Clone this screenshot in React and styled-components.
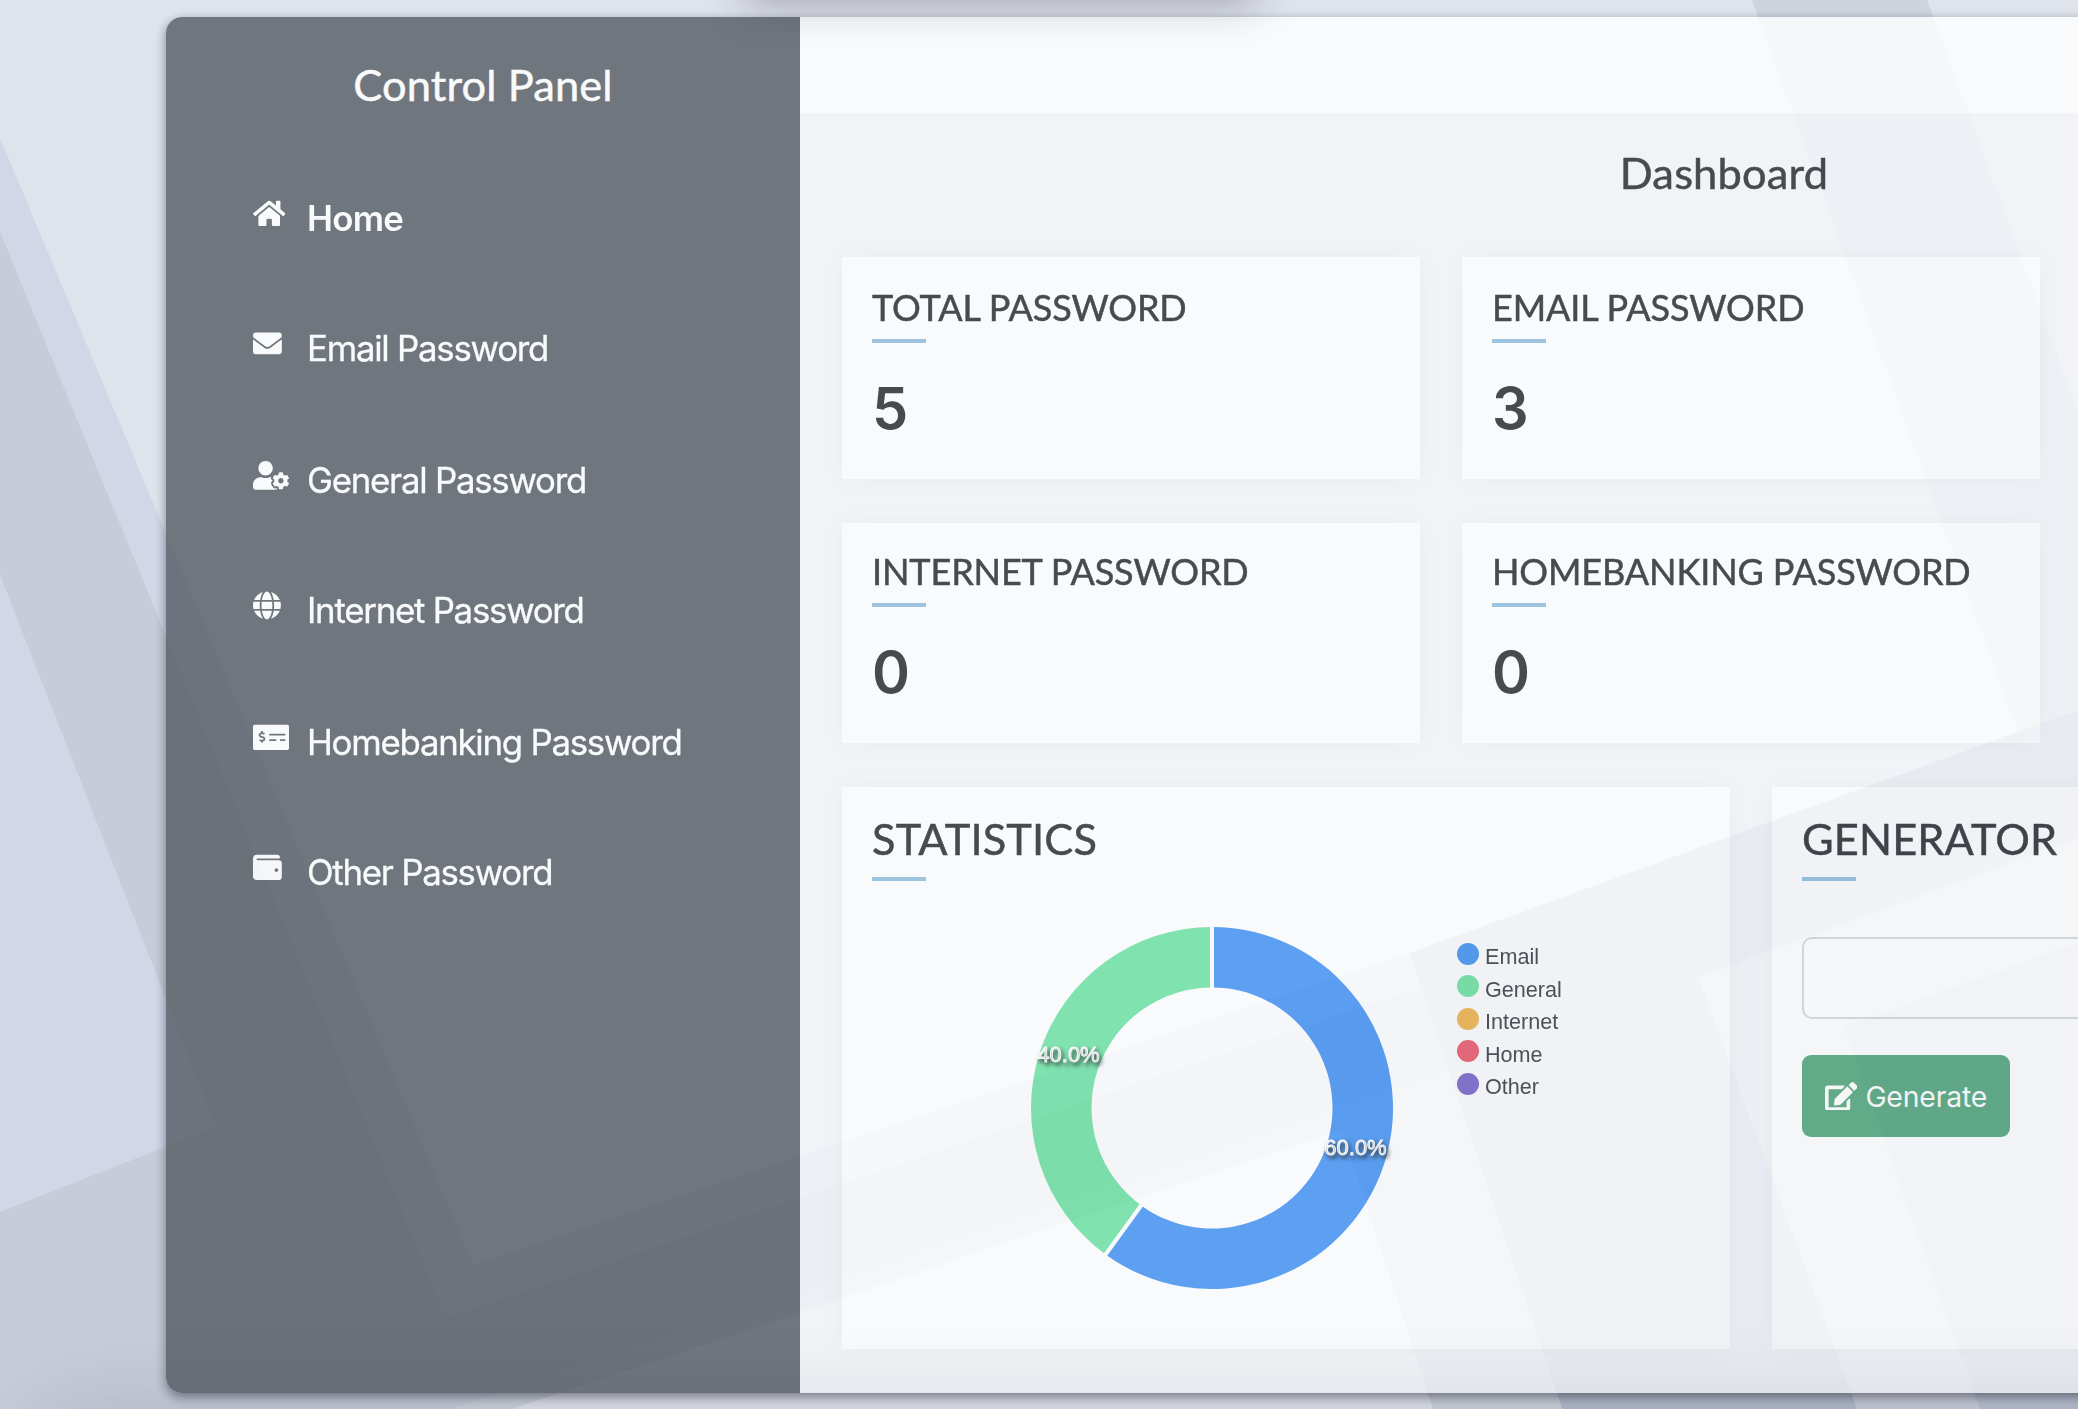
import React from "react";
import styled, { createGlobalStyle } from "styled-components";
import {
  FaHome,
  FaEnvelope,
  FaUserCog,
  FaGlobe,
  FaMoneyCheckAlt,
  FaWallet,
  FaEdit,
} from "react-icons/fa";

const heading = `Lato, "Open Sans", sans-serif`;
const body = `Inter, "Liberation Sans", sans-serif`;
const chart = `"Liberation Sans", Arial, sans-serif`;

const GlobalStyle = createGlobalStyle`
  * { box-sizing: border-box; }
  html, body { margin: 0; height: 100%; overflow: hidden; }
  body { background: #dfe3ec; color: #212529; font-family: ${body}; }
`;

const Screen = styled.div`
  position: relative;
  width: 100vw;
  height: 100vh;
  padding: 17px 0 16px 166px;
  overflow: hidden;
`;

const Wallpaper = styled.svg`
  position: absolute;
  inset: 0;
  width: 2078px;
  height: 1409px;
`;

const TopShade = styled.div`
  position: absolute;
  left: 746px;
  top: -60px;
  width: 508px;
  height: 58px;
  box-shadow: 0 2px 44px rgba(30, 30, 45, 0.37);
  pointer-events: none;
`;

const BottomShade = styled.div`
  position: absolute;
  left: 50px;
  top: 1425px;
  width: 2300px;
  height: 200px;
  border-radius: 20px;
  box-shadow: 0 0 100px rgba(20, 25, 40, 0.18);
  pointer-events: none;
`;

const Panel = styled.div`
  position: relative;
  display: flex;
  width: 2482px;
  height: 1376px;
  border-radius: 16px;
  overflow: hidden;
  background: #f6f7fb;
  opacity: 0.8;
  box-shadow: 0 4px 11px rgba(25, 22, 40, 0.62);
`;

const Sidebar = styled.aside`
  width: 634px;
  flex: none;
  background: #545b62;
  color: #fff;
`;

const SidebarTitle = styled.h1`
  margin: 0;
  padding-top: 41px;
  font: 400 43.4px/52px ${heading};
  letter-spacing: 0.12px;
  text-align: center;
  -webkit-text-stroke: 0.5px currentColor;
`;

const Nav = styled.nav`
  display: flex;
  flex-direction: column;
  padding: 43px 0 0 87px;
`;

const NavItem = styled.a`
  display: flex;
  align-items: center;
  height: 130px;
  color: #fff;
  font-size: 34.8px;
  line-height: 44px;
  font-weight: ${(p) => (p.$active ? 600 : 400)};
  letter-spacing: ${(p) => (p.$active ? "-0.75px" : "-1.25px")};
  -webkit-text-stroke: ${(p) => (p.$active ? 0 : "0.3px")} currentColor;

  &:nth-child(odd):not(:first-child) {
    margin-top: 2px;
  }
`;

const NavIcon = styled.span`
  display: flex;
  width: 54px;
  padding-bottom: 9px;
  svg {
    width: ${(p) => p.$ratio * 28.8}px;
    height: 28.8px;
  }
`;

const Main = styled.main`
  width: 1848px;
  flex: none;
`;

const TopBar = styled.header`
  height: 96px;
  background: #fff;
`;

const PageTitle = styled.h2`
  margin: 0;
  padding: 33px 0 59px;
  font: 400 43.4px/52px ${heading};
  letter-spacing: 0.2px;
  text-align: center;
  -webkit-text-stroke: 0.5px currentColor;
`;

const Content = styled.div`
  display: flex;
  flex-direction: column;
  gap: 44px;
  padding-left: 42px;
`;

const Row = styled.div`
  display: flex;
  gap: 42px;
`;

const Card = styled.section`
  flex: none;
  width: ${(p) => p.$width}px;
  height: ${(p) => p.$height}px;
  padding: ${(p) => p.$top}px 30px 0;
  background: #fff;
  box-shadow: 0 0 26px rgba(0, 0, 0, 0.045);
`;

const CardTitle = styled.h3`
  margin: 0;
  font: 400 ${(p) => (p.$large ? "43.3px/52px" : "36px/44px")} ${heading};
  letter-spacing: ${(p) => (p.$large ? "0.15px" : "-0.12px")};
  white-space: nowrap;
  -webkit-text-stroke: 0.5px currentColor;
`;

const Underline = styled.div`
  width: 54px;
  height: 4px;
  margin-top: ${(p) => (p.$large ? 13 : 10)}px;
  background: #8cbbdc;
`;

const Count = styled.div`
  margin-top: 30px;
  font-size: 57.6px;
  line-height: 70px;
  font-weight: 600;
`;

const ChartRow = styled.div`
  display: flex;
  padding: 46px 0 0 159px;
`;

const Donut = styled.svg`
  width: 362px;
  height: 362px;
  flex: none;
  overflow: visible;
`;

const PercentLabel = styled.text`
  font: 400 22px ${chart};
  fill: #fff;
  stroke: #fff;
  stroke-width: 0.9px;
  text-shadow: 2px 3px 4px rgba(0, 0, 0, 0.7);
`;

const Legend = styled.ul`
  display: flex;
  flex-direction: column;
  margin: 14px 0 0 64px;
  padding: 0;
  list-style: none;
`;

const LegendItem = styled.li`
  display: flex;
  align-items: center;
  gap: 6px;
  height: 32.5px;
  font: 400 21.6px/26px ${chart};
  color: #32363a;
`;

const Swatch = styled.span`
  width: 22px;
  height: 22px;
  margin-bottom: 7px;
  border-radius: 50%;
  background: ${(p) => p.$color};
`;

const Field = styled.input`
  display: block;
  width: 520px;
  height: 82px;
  margin-top: 56px;
  border: 2px solid #d2d5d9;
  border-radius: 10px;
  background: transparent;
`;

const GenerateButton = styled.button`
  display: flex;
  align-items: center;
  gap: 8px;
  width: 208px;
  height: 82px;
  margin-top: 36px;
  padding: 2px 0 0 23px;
  border: 0;
  border-radius: 9px;
  background: #1c8950;
  color: #fff;
  opacity: 0.8;
  font: 400 28.4px/36px ${body};
  letter-spacing: -0.2px;
  svg {
    width: 32.4px;
    height: 28.8px;
    margin-bottom: 2px;
    flex: none;
  }
`;

/* ratio is the glyph's width over its height */
const navItems = [
  { label: "Home", icon: FaHome, ratio: 1.125, active: true },
  { label: "Email Password", icon: FaEnvelope, ratio: 1 },
  { label: "General Password", icon: FaUserCog, ratio: 1.25 },
  { label: "Internet Password", icon: FaGlobe, ratio: 0.96875 },
  { label: "Homebanking Password", icon: FaMoneyCheckAlt, ratio: 1.25 },
  { label: "Other Password", icon: FaWallet, ratio: 1 },
];

const countRows = [
  {
    height: 222,
    top: 28,
    cards: [
      { title: "TOTAL PASSWORD", count: 5 },
      { title: "EMAIL PASSWORD", count: 3 },
    ],
  },
  {
    height: 220,
    top: 26,
    cards: [
      { title: "INTERNET PASSWORD", count: 0 },
      { title: "HOMEBANKING PASSWORD", count: 0 },
    ],
  },
];

const legend = [
  ["Email", "#3d8ff2"],
  ["General", "#6ae29b"],
  ["Internet", "#f2b142"],
  ["Home", "#ee5263"],
  ["Other", "#7460c8"],
];

const slices = [
  { value: 0.6, color: "#3c8ff4", label: "60.0%", x: 324.5, y: 227.5 },
  { value: 0.4, color: "#68e29f", label: "40.0%", x: 37.5, y: 134.5 },
];

const point = (radius, turn) => {
  const angle = turn * 2 * Math.PI;
  return [181 + radius * Math.sin(angle), 181 - radius * Math.cos(angle)];
};

const ringPath = (from, to) => {
  const large = to - from > 0.5 ? 1 : 0;
  const [ax, ay] = point(181, from);
  const [bx, by] = point(181, to);
  const [cx, cy] = point(120.5, to);
  const [dx, dy] = point(120.5, from);
  return `M${ax} ${ay}A181 181 0 ${large} 1 ${bx} ${by}L${cx} ${cy}A120.5 120.5 0 ${large} 0 ${dx} ${dy}Z`;
};

function StatisticsDonut() {
  let turn = 0;
  const arcs = slices.map((slice) => {
    const start = turn;
    turn += slice.value;
    return { ...slice, start, end: turn };
  });
  return (
    <Donut viewBox="0 0 362 362">
      {arcs.map((a) => (
        <path key={a.label} d={ringPath(a.start, a.end)} fill={a.color} />
      ))}
      {arcs.map((a) => {
        const [x1, y1] = point(119, a.start);
        const [x2, y2] = point(182, a.start);
        return (
          <line key={a.label} x1={x1} y1={y1} x2={x2} y2={y2} stroke="#fff" strokeWidth="4" />
        );
      })}
      {arcs.map((a) => (
        <PercentLabel key={a.label} x={a.x} y={a.y} textAnchor="middle">
          {a.label}
        </PercentLabel>
      ))}
    </Donut>
  );
}

function Background() {
  return (
    <Wallpaper viewBox="0 0 2078 1409">
      <rect width="2078" height="1409" fill="#dfe3ec" />
      <path d="M1752 0H1927L2078 413V800H2043L2018 732Z" fill="#cdd4de" />
      <path d="M0 138L473 1265L1409 953L1450 1077V1060L512 1409H0Z" fill="#d1d7e6" />
      <path d="M0 232L446 1318L1421 987L1450 1070L452 1409H0Z" fill="#c6ccd8" />
      <path d="M1450 1070L1562 1409H1433L1342 1130L512 1409H452Z" fill="#ccd3dc" />
      <path d="M0 575L216 1127L0 1212Z" fill="#d1d7e6" />
      <path d="M1409.5 953L2078 710V1409H1562Z" fill="#b4bccc" />
      <path d="M1698 977L2078 838V1409H1857Z" fill="#c9cfda" />
      <path d="M1844.5 1027L2078 943V1409H1980Z" fill="#bac2d1" />
    </Wallpaper>
  );
}

export default function App() {
  return (
    <Screen>
      <GlobalStyle />
      <Background />
      <Panel>
        <Sidebar>
          <SidebarTitle>Control Panel</SidebarTitle>
          <Nav>
            {navItems.map(({ label, icon: Icon, ratio, active }) => (
              <NavItem key={label} $active={active}>
                <NavIcon $ratio={ratio}>
                  <Icon />
                </NavIcon>
                {label}
              </NavItem>
            ))}
          </Nav>
        </Sidebar>
        <Main>
          <TopBar />
          <PageTitle>Dashboard</PageTitle>
          <Content>
            {countRows.map((row) => (
              <Row key={row.top}>
                {row.cards.map((card) => (
                  <Card key={card.title} $width={578} $height={row.height} $top={row.top}>
                    <CardTitle>{card.title}</CardTitle>
                    <Underline />
                    <Count>{card.count}</Count>
                  </Card>
                ))}
              </Row>
            ))}
            <Row>
              <Card $width={888} $height={562} $top={25}>
                <CardTitle $large>STATISTICS</CardTitle>
                <Underline $large />
                <ChartRow>
                  <StatisticsDonut />
                  <Legend>
                    {legend.map(([name, color]) => (
                      <LegendItem key={name}>
                        <Swatch $color={color} />
                        {name}
                      </LegendItem>
                    ))}
                  </Legend>
                </ChartRow>
              </Card>
              <Card $width={888} $height={562} $top={25}>
                <CardTitle $large>GENERATOR</CardTitle>
                <Underline $large />
                <Field readOnly />
                <GenerateButton>
                  <FaEdit />
                  Generate
                </GenerateButton>
              </Card>
            </Row>
          </Content>
        </Main>
      </Panel>
      <TopShade />
      <BottomShade />
    </Screen>
  );
}
